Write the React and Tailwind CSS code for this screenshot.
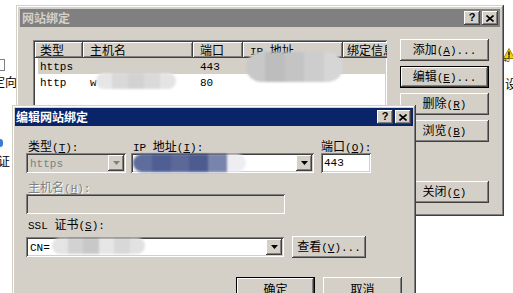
import React from "react";

const ASC = /([\x20-\x7e]+)/;
function Txt({ s }) {
  return s
    .split(ASC)
    .filter(Boolean)
    .map((p, k) =>
      /^[\x20-\x7e]+$/.test(p) ? (
        <span key={k} className="font-['Liberation_Mono',monospace] text-[11px]">
          {p.split(/&(.)/).map((q, j) => (j % 2 === 1 ? <u key={j}>{q}</u> : q))}
        </span>
      ) : (
        <span key={k}>{p}</span>
      )
    );
}

const raised =
  "shadow-[inset_-1px_-1px_#404040,inset_1px_1px_#ffffff,inset_-2px_-2px_#808080,inset_2px_2px_#d4d0c8]";
const frame =
  "shadow-[inset_-1px_-1px_#404040,inset_1px_1px_#d4d0c8,inset_-2px_-2px_#808080,inset_2px_2px_#ffffff]";
const sunken =
  "shadow-[inset_1px_1px_#808080,inset_-1px_-1px_#ffffff,inset_2px_2px_#404040,inset_-2px_-2px_#d4d0c8]";

function Btn({ s, def, className = "" }) {
  return (
    <div
      className={`h-[22px] bg-[#d4d0c8] flex items-center justify-center ${
        def ? "border border-black" : ""
      } ${raised} ${className}`}
    >
      <span className="leading-[14px]">
        <Txt s={s} />
      </span>
    </div>
  );
}

function Arrow({ disabled }) {
  return (
    <div className={`w-[16px] h-[16px] bg-[#d4d0c8] flex items-center justify-center ${raised}`}>
      <svg width="7" height="4" viewBox="0 0 7 4">
        <path d="M0 0h7L3.5 4z" fill={disabled ? "#808080" : "#000"} />
      </svg>
    </div>
  );
}

function TitleBtns() {
  return (
    <div className="flex gap-[2px]">
      <div className={`w-[16px] h-[14px] bg-[#d4d0c8] flex items-center justify-center ${raised}`}>
        <span className="font-['Liberation_Sans',sans-serif] font-bold text-[11px] leading-[11px] -mt-[1px]">?</span>
      </div>
      <div className={`w-[16px] h-[14px] bg-[#d4d0c8] flex items-center justify-center ${raised}`}>
        <svg width="8" height="7" viewBox="0 0 8 7">
          <path d="M0.5 0.5L7.5 6.5M7.5 0.5L0.5 6.5" stroke="#000" strokeWidth="1.6" />
        </svg>
      </div>
    </div>
  );
}

function Blob({ colors, className }) {
  return (
    <div className={`absolute flex overflow-hidden rounded-full blur-[1px] ${className}`}>
      {colors.map((c, i) => (
        <div key={i} className="flex-1 h-full" style={{ background: c }} />
      ))}
    </div>
  );
}

function Label({ s, className = "" }) {
  return (
    <div className={`h-[14px] leading-[14px] whitespace-nowrap ${className}`}>
      <Txt s={s} />
    </div>
  );
}

function BackDialog() {
  const cols = [
    ["类型", 48, "pl-[5px]"],
    ["主机名", 110, "pl-[7px]"],
    ["端口", 50, "pl-[7px]"],
    ["IP 地址", 100, "pl-[7px]"],
    ["绑定信息", 60, "pl-[4px]"],
  ];
  return (
    <div className={`absolute left-[16px] top-[5px] w-[488px] h-[211px] bg-[#d4d0c8] p-[4px] flex flex-col ${frame}`}>
      <div className="h-[18px] bg-[#808080] flex items-center justify-between pl-[2px] pr-[2px]">
        <span className="font-bold text-[#d4d0c8]">网站绑定</span>
        <TitleBtns />
      </div>
      <div className="flex">
        <div className={`relative ml-[13px] mt-[13px] w-[354px] h-[150px] bg-white p-[2px] overflow-hidden ${sunken}`}>
          <div className="flex h-[16px]">
            {cols.map(([t, w, pl], i) => (
              <div
                key={i}
                className={`shrink-0 h-[16px] bg-[#d4d0c8] leading-[15px] ${pl} whitespace-nowrap overflow-hidden ${raised}`}
                style={{ width: w }}
              >
                <Txt s={t} />
              </div>
            ))}
          </div>
          <div className="flex h-[16px] items-center ml-[3px] bg-[#d4d0c8]">
            <div className="w-[45px] pl-[2px]"><Txt s="https" /></div>
            <div className="w-[110px]" />
            <div className="w-[50px] pl-[7px]"><Txt s="443" /></div>
          </div>
          <div className="flex h-[16px] items-center ml-[3px]">
            <div className="w-[45px] pl-[2px]"><Txt s="http" /></div>
            <div className="w-[110px] pl-[7px]"><Txt s="w" /></div>
            <div className="w-[50px] pl-[7px]"><Txt s="80" /></div>
          </div>
        </div>
        <div className="ml-[13px] mt-[12px] w-[89px] flex flex-col gap-[5px]">
          <Btn s="添加(&A)..." />
          <Btn s="编辑(&E)..." def />
          <Btn s="删除(&R)" />
          <Btn s="浏览(&B)" />
          <Btn s="关闭(&C)" className="mt-[34px]" />
        </div>
      </div>
    </div>
  );
}

function Combo({ w, text, disabled, children }) {
  return (
    <div
      className={`relative h-[20px] p-[2px] flex items-center ${disabled ? "bg-[#d4d0c8]" : "bg-white"} ${sunken}`}
      style={{ width: w }}
    >
      <div className={`flex-1 pl-[2px] whitespace-nowrap overflow-hidden ${disabled ? "text-[#808080]" : ""}`}>
        {text ? <Txt s={text} /> : null}
      </div>
      {children}
      <Arrow disabled={disabled} />
    </div>
  );
}

function FrontDialog() {
  return (
    <div className={`absolute left-[12px] top-[105px] w-[404px] h-[200px] bg-[#d4d0c8] p-[3px] flex flex-col ${frame}`}>
      <div className="h-[18px] bg-[#0a246a] flex items-center justify-between pl-[1px] pr-[2px]">
        <span className="font-bold text-white">编辑网站绑定</span>
        <TitleBtns />
      </div>
      <div className="pl-[11px] flex flex-col">
        <div className="flex mt-[13px]">
          <div className="w-[100px] flex flex-col">
            <Label s="类型(&T):" className="pl-[2px]" />
            <Combo w={100} text="https" disabled />
          </div>
          <div className="ml-[5px] w-[183px] flex flex-col">
            <Label s="IP 地址(&I):" className="pl-[2px]" />
            <Combo w={183} />
          </div>
          <div className="ml-[7px] w-[50px] flex flex-col">
            <Label s="端口(&O):" />
            <div className={`h-[20px] w-[50px] bg-white p-[2px] pl-[3px] flex items-center ${sunken}`}>
              <Txt s="443" />
            </div>
          </div>
        </div>
        <Label s="主机名(&H):" className="mt-[7px] pl-[2px] text-[#808080] [text-shadow:1px_1px_0_#fff]" />
        <div className={`w-[259px] h-[20px] bg-[#d4d0c8] ${sunken}`} />
        <Label s="SSL 证书(&S):" className="mt-[3px] pl-[2px]" />
        <div className="flex items-center mt-[5px]">
          <Combo w={258} text="CN=" />
          <Btn s="查看(&V)..." className="ml-[8px] w-[74px]" />
        </div>
        <div className="flex mt-[19px] ml-[210px] gap-[8px]">
          <Btn s="确定" def className="w-[79px] h-[24px]" />
          <Btn s="取消" className="w-[79px] h-[24px]" />
        </div>
      </div>
    </div>
  );
}

export default function App() {
  return (
    <div className="relative w-[513px] h-[293px] overflow-hidden bg-white font-['Noto_Sans_CJK_SC',sans-serif] text-[12px] leading-[14px] text-black">
      {/* desktop fragments */}
      <div className="absolute left-[-4px] top-[59px] w-[9px] h-[12px] border border-[#808080] bg-white" />
      <div className="absolute left-[-7px] top-[75px] whitespace-nowrap">定向</div>
      <div className="absolute left-[-3px] top-[139px] w-[6px] h-[8px] rounded-full bg-[#3a7bd5]" />
      <div className="absolute left-[-2px] top-[154px]">证</div>
      <svg className="absolute left-[503px] top-[48px]" width="12" height="11" viewBox="0 0 12 11">
        <path d="M6 0.5L11.5 10.5H0.5z" fill="#f5d000" stroke="#8a6d00" strokeWidth="0.8" />
        <rect x="5.3" y="3.5" width="1.4" height="4" fill="#000" />
        <rect x="5.3" y="8.3" width="1.4" height="1.3" fill="#000" />
      </svg>
      <div className="absolute left-[503px] top-[57px] text-[6px] leading-[6px] font-['Liberation_Sans',sans-serif]">40</div>
      <div className="absolute left-[505px] top-[77px]">设</div>

      <BackDialog />

      {/* blurred areas on back dialog */}
      <Blob className="left-[96px] top-[73px] w-[80px] h-[16px]" colors={["#e6e6e6", "#d9d9d9", "#d2d2d2", "#dadada", "#e4e4e4"]} />
      <Blob className="left-[246px] top-[52px] w-[97px] h-[30px] rounded-[10px]" colors={["#c8c8c8", "#bdbdbd", "#c4c4c4", "#cdcdcd", "#d6d6d6"]} />

      <FrontDialog />

      {/* blurred areas on front dialog */}
      <Blob className="left-[133px] top-[154px] w-[113px] h-[18px]" colors={["#5f6d9c", "#4f5f93", "#5b6898", "#4d5c90", "#7884ab", "#eeeef2"]} />
      <Blob className="left-[52px] top-[238px] w-[93px] h-[16px]" colors={["#e4e4e4", "#d2d2d2", "#c8c8c8", "#e6e6e6", "#d8d8d8", "#e2e2e2"]} />
    </div>
  );
}
